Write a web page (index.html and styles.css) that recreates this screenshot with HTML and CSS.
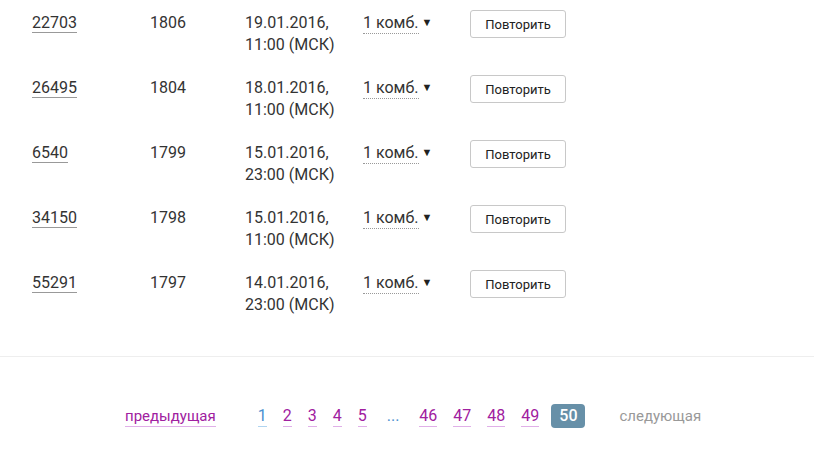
FILE: index.html
```html
<!DOCTYPE html>
<html lang="ru">
<head>
<meta charset="utf-8">
<link rel="stylesheet" href="styles.css">
</head>
<body>
<div class="list">
  <div class="row">
    <div class="c1"><a class="num" href="#">22703</a></div>
    <div class="c2">1806</div>
    <div class="c3">19.01.2016,<br>11:00 (МСК)</div>
    <div class="c4"><span class="combo">1 комб.</span><span class="tri">▼</span></div>
    <div class="c5"><button class="btn">Повторить</button></div>
  </div>
  <div class="row">
    <div class="c1"><a class="num" href="#">26495</a></div>
    <div class="c2">1804</div>
    <div class="c3">18.01.2016,<br>11:00 (МСК)</div>
    <div class="c4"><span class="combo">1 комб.</span><span class="tri">▼</span></div>
    <div class="c5"><button class="btn">Повторить</button></div>
  </div>
  <div class="row">
    <div class="c1"><a class="num" href="#">6540</a></div>
    <div class="c2">1799</div>
    <div class="c3">15.01.2016,<br>23:00 (МСК)</div>
    <div class="c4"><span class="combo">1 комб.</span><span class="tri">▼</span></div>
    <div class="c5"><button class="btn">Повторить</button></div>
  </div>
  <div class="row">
    <div class="c1"><a class="num" href="#">34150</a></div>
    <div class="c2">1798</div>
    <div class="c3">15.01.2016,<br>11:00 (МСК)</div>
    <div class="c4"><span class="combo">1 комб.</span><span class="tri">▼</span></div>
    <div class="c5"><button class="btn">Повторить</button></div>
  </div>
  <div class="row">
    <div class="c1"><a class="num" href="#">55291</a></div>
    <div class="c2">1797</div>
    <div class="c3">14.01.2016,<br>23:00 (МСК)</div>
    <div class="c4"><span class="combo">1 комб.</span><span class="tri">▼</span></div>
    <div class="c5"><button class="btn">Повторить</button></div>
  </div>
</div>
<div class="footer">
  <nav class="pager">
    <a class="prev" href="#">предыдущая</a>
    <a class="pg cur-link" href="#">1</a>
    <a class="pg" href="#">2</a>
    <a class="pg" href="#">3</a>
    <a class="pg" href="#">4</a>
    <a class="pg" href="#">5</a>
    <span class="dots">...</span>
    <a class="pg" href="#">46</a>
    <a class="pg" href="#">47</a>
    <a class="pg" href="#">48</a>
    <a class="pg" href="#">49</a>
    <span class="active">50</span>
    <span class="next">следующая</span>
  </nav>
</div>
</body>
</html>
```

FILE: styles.css
```css
html, body {
  margin: 0;
  padding: 0;
  background: #fff;
}
body {
  font-family: Roboto, "Liberation Sans", sans-serif;
  color: #333;
  width: 814px;
  height: 456px;
  overflow: hidden;
}
.list {
  padding-left: 32px;
}
.row {
  display: grid;
  grid-template-columns: 118px 95px 118px 107px 110px;
  height: 65px;
  box-sizing: border-box;
  padding-top: 12px;
  font-size: 16px;
  line-height: 22px;
}
.num {
  color: #333;
  text-decoration: none;
  border-bottom: 1px solid #999;
  display: inline-block;
  line-height: 19px;
}
.combo {
  border-bottom: 1px dotted #999;
  display: inline-block;
  line-height: 20px;
}
.tri {
  font-size: 11px;
  margin-left: 3px;
  vertical-align: 2px;
  color: #222;
}
.c5 {
  margin-top: -2px;
}
.btn {
  width: 96px;
  height: 28px;
  background: #fff;
  border: 1px solid #c8c8c8;
  border-radius: 3px;
  font-family: Roboto, "Liberation Sans", sans-serif;
  font-size: 13px;
  color: #222;
  padding: 0;
}
.footer {
  margin-top: 31px;
  border-top: 1px solid #eeeeee;
  height: 100px;
}
.pager {
  display: flex;
  align-items: center;
  padding-left: 125px;
  padding-top: 47px;
  font-size: 16px;
  line-height: 20px;
}
.pager a {
  text-decoration: none;
}
.prev {
  font-size: 15px;
  color: #a020a0;
  border-bottom: 1px solid #e0b0e8;
  margin-right: 42px;
}
.pg {
  color: #a020a0;
  border-bottom: 1px solid #e0b0e8;
  margin-right: 16px;
}
.cur-link {
  color: #4a90d0;
  border-bottom-color: #b0d4f0;
}
.dots {
  color: #4a90d0;
  padding: 0 4px;
  margin-right: 16px;
}
.active {
  background: #6790a8;
  color: #fff;
  border-radius: 4px;
  padding: 2px 8px;
  margin-left: -4px;
  font-weight: 500;
}
.next {
  font-size: 15px;
  color: #999;
  margin-left: 34px;
}
```
